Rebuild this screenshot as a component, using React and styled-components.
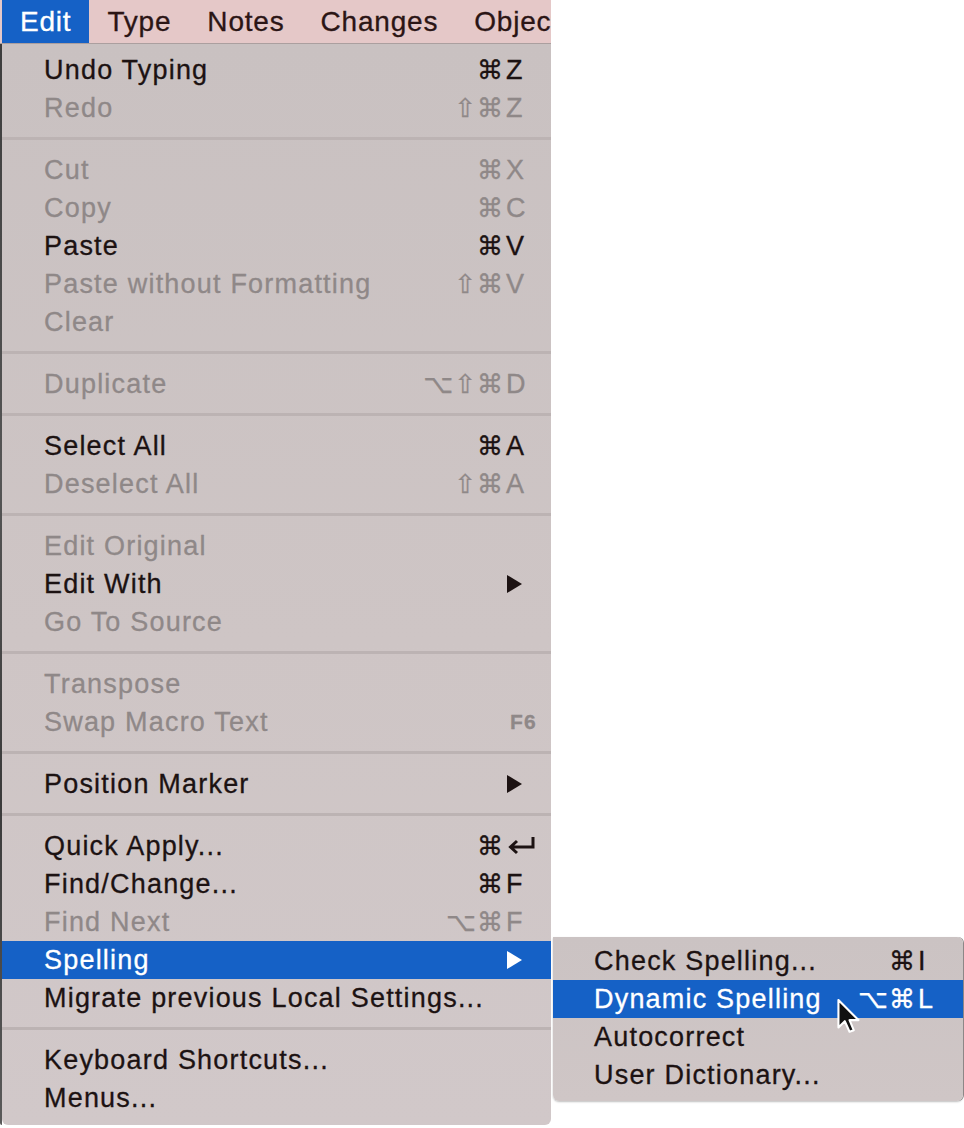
import React from 'react';
import styled, { createGlobalStyle } from 'styled-components';

const GlobalStyle = createGlobalStyle`
  html, body {
    margin: 0;
    padding: 0;
    background: #ffffff;
  }
  body {
    font-family: "Liberation Sans", Arial, sans-serif;
    -webkit-font-smoothing: antialiased;
  }
`;

const Screen = styled.div`
  width: 964px;
  height: 1128px;
  overflow: hidden;
  display: flex;
  flex-direction: column;
  align-items: flex-start;
`;

const MenuBar = styled.div`
  width: 549px;
  height: 43px;
  padding-left: 2px;
  display: flex;
  align-items: stretch;
  background: #e5c8c8;
  border-bottom: 1px solid #ab9f9f;
  overflow: hidden;
`;

const BarTitle = styled.div`
  display: flex;
  align-items: center;
  padding: 0 18px;
  font-size: 28px;
  letter-spacing: 0.8px;
  white-space: nowrap;
  -webkit-text-stroke: 0.3px currentColor;
  color: ${p => (p.$open ? '#ffffff' : '#2b1515')};
  background: ${p => (p.$open ? '#1561c6' : 'transparent')};
`;

const Body = styled.div`
  display: flex;
  align-items: stretch;
`;

/* sliver of the dark window sitting behind the menu */
const BackEdge = styled.div`
  width: 2px;
  height: 1081px;
  background: linear-gradient(#3d3d3d, #555 40%, #3a3a3a 70%, #5a5a5a);
  border-bottom-left-radius: 2px;
`;

const Dropdown = styled.div`
  position: relative;
  width: 549px;
  padding: 7px 0 8px;
  background: linear-gradient(#c9c1c1, #cec5c5 55%, #d1c8c9);
  border-radius: 0 0 6px 6px;
`;

const Row = styled.div`
  position: relative;
  height: 38px;
  display: flex;
  align-items: center;
  padding-left: ${p => p.$indent}px;
  padding-right: 12px;
  font-size: 27px;
  letter-spacing: 1.2px;
  white-space: nowrap;
  -webkit-text-stroke: 0.3px currentColor;
  color: ${p => (p.$active ? '#ffffff' : p.$disabled ? '#8f8888' : '#1c1212')};
  background: ${p => (p.$active ? '#1561c6' : 'transparent')};
`;

const Label = styled.span`
  flex: 1;
`;

const Mods = styled.span`
  font-family: "DejaVu Sans", sans-serif;
  font-size: 26px;
  letter-spacing: 1px;
  margin-right: 2px;
  -webkit-text-stroke: 0.3px currentColor;
`;

const Key = styled.span`
  width: 33px;
  display: flex;
  align-items: center;
  font-size: ${p => (p.$fkey ? '21px' : '27px')};
  font-weight: ${p => (p.$fkey ? 700 : 400)};
  padding-left: ${p => (p.$fkey ? 4 : 0)}px;
  box-sizing: border-box;
`;

const Separator = styled.div`
  height: 3px;
  margin: 10px 0 11px;
  background: #bcb3b3;
`;

const Submenu = styled.div`
  position: absolute;
  top: -4px;
  left: calc(100% + 2px);
  width: 410px;
  padding: 5px 0 7px;
  background: linear-gradient(#cbc3c3, #cfc6c6);
  border-radius: 0 6px 6px 6px;
  box-shadow: 1px 0 0 #8d8787, 0 1px 2px rgba(0, 0, 0, 0.25);
`;

const Pointer = styled.svg`
  position: absolute;
  left: 283px;
  top: 62px;
  pointer-events: none;
`;

const Arrow = () => (
  <Key>
    <svg width="17" height="18" viewBox="0 0 17 18">
      <path d="M1 0 L16 9 L1 18 Z" fill="currentColor" />
    </svg>
  </Key>
);

const ReturnKey = () => (
  <svg width="31" height="22" viewBox="0 0 31 22">
    <path
      d="M27 2 V12 H5 M11 6 L4.5 12 L11 18"
      fill="none"
      stroke="currentColor"
      strokeWidth="3"
      strokeLinejoin="miter"
    />
  </svg>
);

const spellingItems = [
  { label: 'Check Spelling...', mods: '⌘', key: 'I' },
  { label: 'Dynamic Spelling', mods: '⌥⌘', key: 'L', active: true },
  { label: 'Autocorrect' },
  { label: 'User Dictionary...' },
];

const editItems = [
  { label: 'Undo Typing', mods: '⌘', key: 'Z' },
  { label: 'Redo', mods: '⇧⌘', key: 'Z', disabled: true },
  'sep',
  { label: 'Cut', mods: '⌘', key: 'X', disabled: true },
  { label: 'Copy', mods: '⌘', key: 'C', disabled: true },
  { label: 'Paste', mods: '⌘', key: 'V' },
  { label: 'Paste without Formatting', mods: '⇧⌘', key: 'V', disabled: true },
  { label: 'Clear', disabled: true },
  'sep',
  { label: 'Duplicate', mods: '⌥⇧⌘', key: 'D', disabled: true },
  'sep',
  { label: 'Select All', mods: '⌘', key: 'A' },
  { label: 'Deselect All', mods: '⇧⌘', key: 'A', disabled: true },
  'sep',
  { label: 'Edit Original', disabled: true },
  { label: 'Edit With', submenu: true },
  { label: 'Go To Source', disabled: true },
  'sep',
  { label: 'Transpose', disabled: true },
  { label: 'Swap Macro Text', fkey: 'F6', disabled: true },
  'sep',
  { label: 'Position Marker', submenu: true },
  'sep',
  { label: 'Quick Apply...', mods: '⌘', key: 'return' },
  { label: 'Find/Change...', mods: '⌘', key: 'F' },
  { label: 'Find Next', mods: '⌥⌘', key: 'F', disabled: true },
  { label: 'Spelling', submenu: spellingItems, active: true },
  { label: 'Migrate previous Local Settings...' },
  'sep',
  { label: 'Keyboard Shortcuts...' },
  { label: 'Menus...' },
];

const Shortcut = ({ item }) => {
  if (item.submenu) return <Arrow />;
  if (item.fkey) return <Key $fkey>{item.fkey}</Key>;
  if (!item.key) return null;
  return (
    <>
      <Mods>{item.mods}</Mods>
      <Key>{item.key === 'return' ? <ReturnKey /> : item.key}</Key>
    </>
  );
};

const MenuItem = ({ item, indent }) => (
  <Row $indent={indent} $disabled={item.disabled} $active={item.active}>
    <Label>{item.label}</Label>
    <Shortcut item={item} />
    {Array.isArray(item.submenu) && (
      <Submenu>
        {item.submenu.map(sub => (
          <MenuItem key={sub.label} item={sub} indent={41} />
        ))}
        <Pointer width="26" height="38" viewBox="0 0 24 36">
          <path
            d="M2 1 L2 27 L8 21 L12.5 31 L16.5 29.5 L12.5 20 L21 20 Z"
            fill="#111"
            stroke="#fff"
            strokeWidth="2"
            strokeLinejoin="round"
          />
        </Pointer>
      </Submenu>
    )}
  </Row>
);

export default function App() {
  return (
    <Screen>
      <GlobalStyle />
      <MenuBar>
        <BarTitle $open>Edit</BarTitle>
        <BarTitle>Type</BarTitle>
        <BarTitle>Notes</BarTitle>
        <BarTitle>Changes</BarTitle>
        <BarTitle>Object</BarTitle>
      </MenuBar>
      <Body>
        <BackEdge />
        <Dropdown>
          {editItems.map((item, i) =>
            item === 'sep' ? (
              <Separator key={'sep' + i} />
            ) : (
              <MenuItem key={item.label} item={item} indent={42} />
            )
          )}
        </Dropdown>
      </Body>
    </Screen>
  );
}
